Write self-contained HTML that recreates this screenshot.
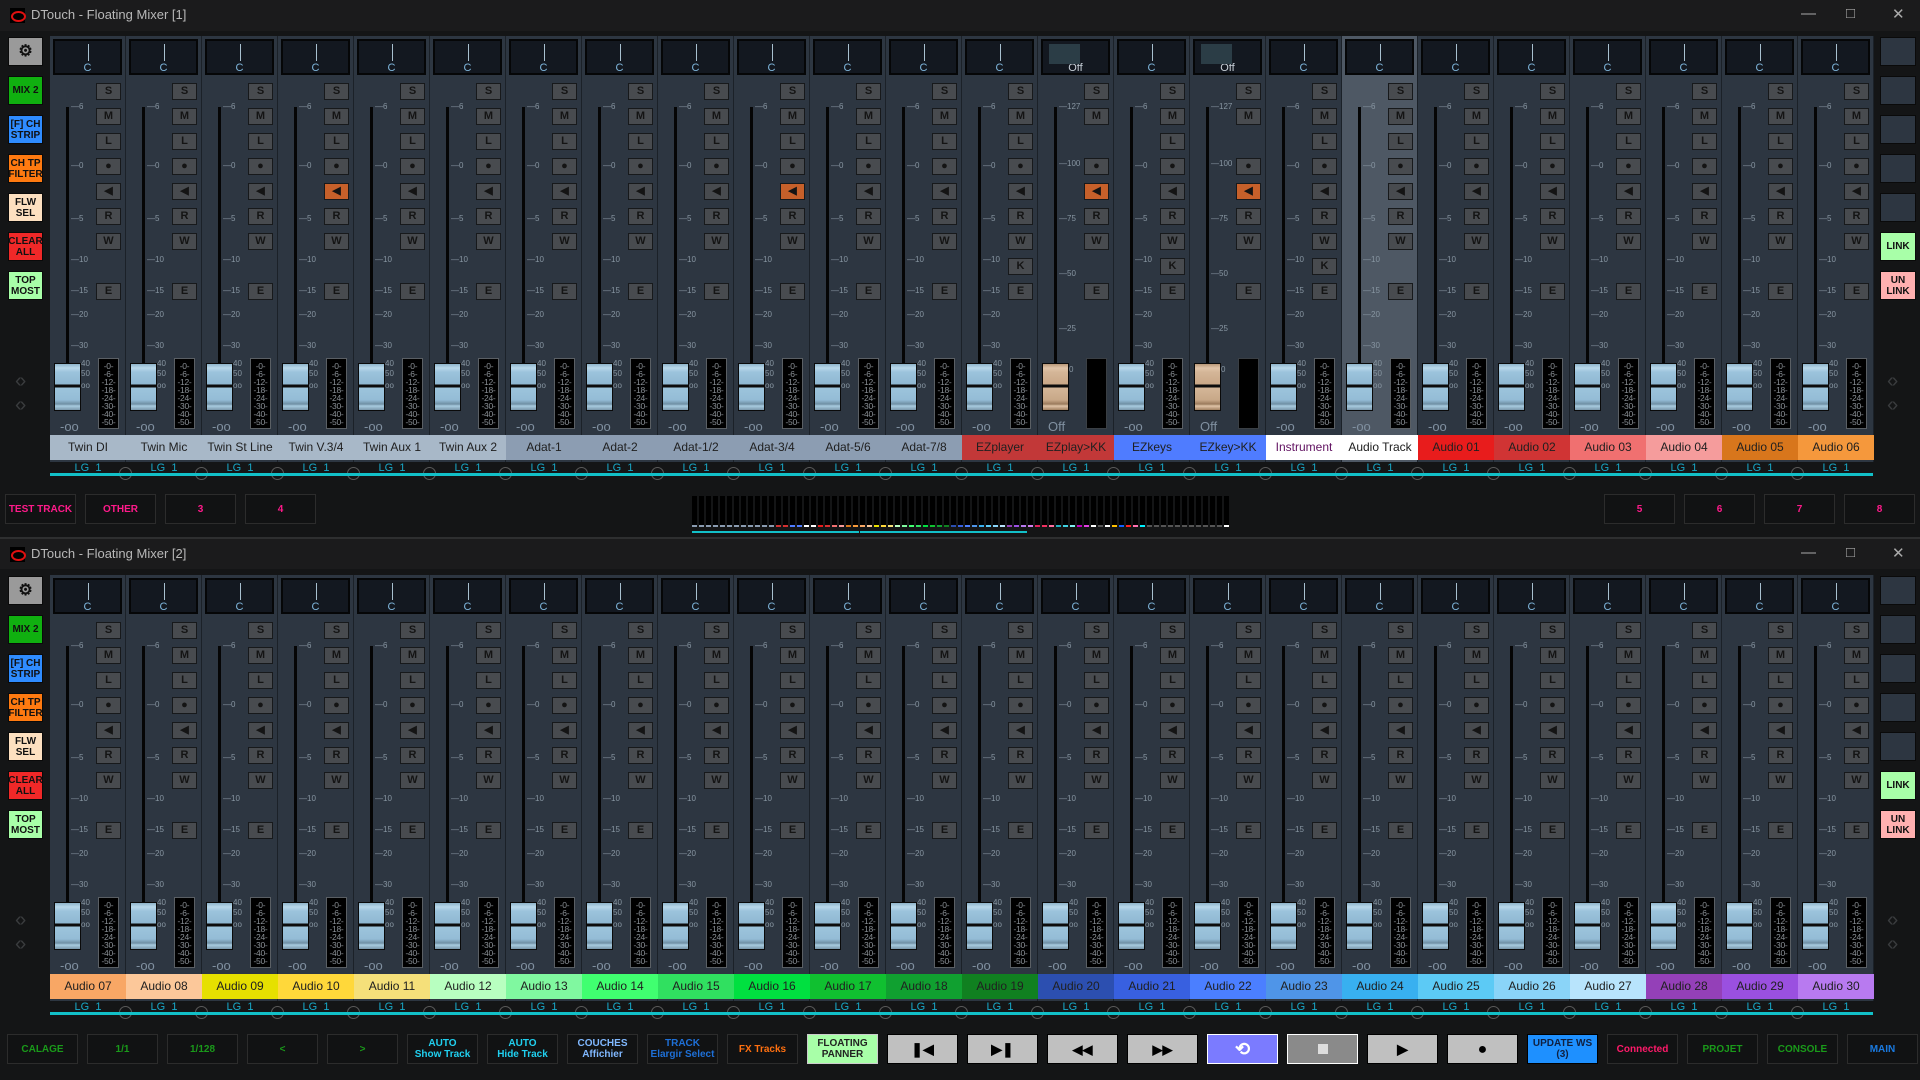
<!DOCTYPE html>
<html><head><meta charset="utf-8"><style>
*{box-sizing:border-box;margin:0;padding:0}
body{width:1920px;height:1080px;background:#141516;position:relative;overflow:hidden;font-family:"Liberation Sans",sans-serif}
.tb{position:absolute;left:0;width:1920px;height:31px;background:#1b1b1c}
.tb .lo{position:absolute;left:10px;top:8px;width:15px;height:15px;background:#000}
.tb .lo:after{content:"";position:absolute;left:1px;top:3px;width:11px;height:7px;border:2px solid #e01010;border-radius:50%}
.tb .t{position:absolute;left:31px;top:7px;font-size:13px;color:#b8b8b8}
.tb .w{position:absolute;top:5px;font-size:15px;color:#aaa}
.mx{position:absolute;left:0;width:1920px;height:445px}
.s{position:absolute;top:0;width:76px;height:426px;background:#2d3641;border-right:1px solid #1b2128}
.s.hl{background:#4e5864}
.p{position:absolute;left:3px;top:3px;width:69px;height:36px;background:#131820;border:2px solid #050607;color:#7fb6dc;font-size:11px;text-align:center;padding-top:21px}
.p i{position:absolute;left:33px;top:3px;width:1px;height:17px;background:#a8c0d0}
.p em{position:absolute;left:6px;top:3px;width:31px;height:20px;background:#2b3d46}
.p.o{color:#c8d0d8}
.bt{position:absolute;left:46px;top:47px;width:25px}
.bt u{display:block;height:17px;margin-bottom:8px;background:#484b4f;border:1px solid #17191b;color:#141414;font:bold 11px/15px "Liberation Sans",sans-serif;text-align:center;text-decoration:none}
.bt u.h{visibility:hidden}
.bt u.or{background:#c6602a}
.f{position:absolute;left:16px;top:71px;width:3px;height:260px;background:#050505}
.sc{position:absolute;left:21px;top:0;font-size:8px;color:#8896a2}
.sc span{position:absolute;white-space:nowrap;line-height:8px}
.sc span:before{content:"\2014 ";color:#8896a2}
.sc span.nd:before{content:""}
.cap{position:absolute;left:4px;top:327px;width:27px;height:48px;border:1px solid #0a0a0a;background:linear-gradient(#8fb3c9 0,#b8d8ea 4px,#9cc4dc 8px,#8fb8d2 20px,#0c0c0c 21px,#0c0c0c 23px,#9cc4dc 24px,#94bcd6 36px,#6f8fa4 40px,#a8cce0 42px,#7a98ac 46px)}
.cap.tan{background:linear-gradient(#b89878 0,#e0c4a8 4px,#d4b698 8px,#caa888 20px,#0c0c0c 21px,#0c0c0c 23px,#d4b698 24px,#c8a888 36px,#9a7a5c 40px,#e0c4a8 42px,#a08060 46px)}
.m{position:absolute;left:48px;top:322px;width:21px;height:71px;background:#000;border:1px solid #5a5f64;color:#8a9096;font-size:8.5px;line-height:8px;text-align:center;padding-top:3px;letter-spacing:-.3px}
.m.bl{border:1px solid #3a3f44}
.inf{position:absolute;left:10px;top:383px;font-size:13px;color:#8090a0}
.n{position:absolute;left:0;top:399px;width:76px;height:25px;font-size:12px;line-height:25px;text-align:center;color:#202020;white-space:nowrap;overflow:hidden}
.lg{position:absolute;left:0;top:426px;width:76px;text-align:center;font-size:11px;color:#18a8c8}
.s+.s:after{content:"";position:absolute;left:-7px;top:431px;width:11px;height:11px;border:1px solid #5a5a5a;border-radius:50%}
.cy{position:absolute;left:50px;top:437px;width:1823px;height:3px;background:#12c0c8}
.lb{position:absolute;left:8px;width:35px;height:29px;border:1px solid #0a0a0a;font:bold 10px/11px "Liberation Sans Narrow","Liberation Sans",sans-serif;text-align:center;display:flex;align-items:center;justify-content:center;color:#111}
.rb{position:absolute;left:1880px;width:36px;height:29px;border:1px solid #0a0a0a;background:#2d3641;font:bold 10px/11px "Liberation Sans",sans-serif;text-align:center;display:flex;align-items:center;justify-content:center;color:#111}
.ar{position:absolute;font-size:20px;color:#3a3c3e;letter-spacing:-2px}
.db{position:absolute;width:71px;height:30px;background:#111213;border:1px solid #2c2c2c;font:bold 10px/11px "Liberation Sans Narrow","Liberation Sans",sans-serif;text-align:center;display:flex;align-items:center;justify-content:center}
.mm{position:absolute;left:692px;top:496px;display:flex}
.mm span{display:block;width:5px;height:31px;margin-right:2px;background:#000;border-bottom:2px solid #555}
</style></head><body>

<!-- Window 1 -->
<div class="tb" style="top:0"><div class="lo"></div><div class="t">DTouch - Floating Mixer [1]</div><div class="w" style="left:1801px">&#8212;</div><div class="w" style="left:1846px">&#9633;</div><div class="w" style="left:1892px">&#10005;</div></div>

<div class="lb" style="top:37px;background:#9a9a9a;font-size:16px">&#9881;</div>
<div class="lb" style="top:76px;background:#10b010">MIX 2</div>
<div class="lb" style="top:115px;background:#2f8cff">[F] CH STRIP</div>
<div class="lb" style="top:154px;background:#ff7a10">CH TP FILTER</div>
<div class="lb" style="top:193px;background:#fde0c0">FLW SEL</div>
<div class="lb" style="top:232px;background:#f02828">CLEAR ALL</div>
<div class="lb" style="top:271px;background:#a8ffa8">TOP MOST</div>
<div class="ar" style="left:15px;top:370px">&#8249;&#8250;</div><div class="ar" style="left:15px;top:394px">&#8249;&#8250;</div>
<div class="rb" style="top:37px"></div><div class="rb" style="top:76px"></div><div class="rb" style="top:115px"></div><div class="rb" style="top:154px"></div><div class="rb" style="top:193px"></div>
<div class="rb" style="top:232px;background:#a8ffa8">LINK</div>
<div class="rb" style="top:271px;background:#ffb0b0">UN LINK</div>
<div class="ar" style="left:1887px;top:370px">&#8249;&#8250;</div><div class="ar" style="left:1887px;top:394px">&#8249;&#8250;</div>

<div class="mx" style="top:36px">
<div class="s" style="left:50px"><div class="p"><i></i>C</div><div class="bt"><u>S</u><u>M</u><u>L</u><u>●</u><u>◀</u><u>R</u><u>W</u><u class="h"></u><u>E</u></div><div class="f"></div><div class="sc"><span style="top:67px">6</span><span style="top:126px">0</span><span style="top:179px">5</span><span style="top:220px">10</span><span style="top:251px">15</span><span style="top:275px">20</span><span style="top:306px">30</span><span class="nd" style="top:324px;left:10px">40</span><span class="nd" style="top:334px;left:10px">50</span><span class="nd" style="top:346px;left:10px">oo</span></div><div class="cap"></div><div class="m">-0-<br>-6-<br>-12-<br>-18-<br>-24-<br>-30-<br>-40-<br>-50-</div><div class="inf">-oo</div><div class="n" style="background:#a8b8c8">Twin DI</div><div class="lg">LG&nbsp; 1</div></div>
<div class="s" style="left:126px"><div class="p"><i></i>C</div><div class="bt"><u>S</u><u>M</u><u>L</u><u>●</u><u>◀</u><u>R</u><u>W</u><u class="h"></u><u>E</u></div><div class="f"></div><div class="sc"><span style="top:67px">6</span><span style="top:126px">0</span><span style="top:179px">5</span><span style="top:220px">10</span><span style="top:251px">15</span><span style="top:275px">20</span><span style="top:306px">30</span><span class="nd" style="top:324px;left:10px">40</span><span class="nd" style="top:334px;left:10px">50</span><span class="nd" style="top:346px;left:10px">oo</span></div><div class="cap"></div><div class="m">-0-<br>-6-<br>-12-<br>-18-<br>-24-<br>-30-<br>-40-<br>-50-</div><div class="inf">-oo</div><div class="n" style="background:#a8b8c8">Twin Mic</div><div class="lg">LG&nbsp; 1</div></div>
<div class="s" style="left:202px"><div class="p"><i></i>C</div><div class="bt"><u>S</u><u>M</u><u>L</u><u>●</u><u>◀</u><u>R</u><u>W</u><u class="h"></u><u>E</u></div><div class="f"></div><div class="sc"><span style="top:67px">6</span><span style="top:126px">0</span><span style="top:179px">5</span><span style="top:220px">10</span><span style="top:251px">15</span><span style="top:275px">20</span><span style="top:306px">30</span><span class="nd" style="top:324px;left:10px">40</span><span class="nd" style="top:334px;left:10px">50</span><span class="nd" style="top:346px;left:10px">oo</span></div><div class="cap"></div><div class="m">-0-<br>-6-<br>-12-<br>-18-<br>-24-<br>-30-<br>-40-<br>-50-</div><div class="inf">-oo</div><div class="n" style="background:#a8b8c8">Twin St Line</div><div class="lg">LG&nbsp; 1</div></div>
<div class="s" style="left:278px"><div class="p"><i></i>C</div><div class="bt"><u>S</u><u>M</u><u>L</u><u>●</u><u class="or">◀</u><u>R</u><u>W</u><u class="h"></u><u>E</u></div><div class="f"></div><div class="sc"><span style="top:67px">6</span><span style="top:126px">0</span><span style="top:179px">5</span><span style="top:220px">10</span><span style="top:251px">15</span><span style="top:275px">20</span><span style="top:306px">30</span><span class="nd" style="top:324px;left:10px">40</span><span class="nd" style="top:334px;left:10px">50</span><span class="nd" style="top:346px;left:10px">oo</span></div><div class="cap"></div><div class="m">-0-<br>-6-<br>-12-<br>-18-<br>-24-<br>-30-<br>-40-<br>-50-</div><div class="inf">-oo</div><div class="n" style="background:#a8b8c8">Twin V.3/4</div><div class="lg">LG&nbsp; 1</div></div>
<div class="s" style="left:354px"><div class="p"><i></i>C</div><div class="bt"><u>S</u><u>M</u><u>L</u><u>●</u><u>◀</u><u>R</u><u>W</u><u class="h"></u><u>E</u></div><div class="f"></div><div class="sc"><span style="top:67px">6</span><span style="top:126px">0</span><span style="top:179px">5</span><span style="top:220px">10</span><span style="top:251px">15</span><span style="top:275px">20</span><span style="top:306px">30</span><span class="nd" style="top:324px;left:10px">40</span><span class="nd" style="top:334px;left:10px">50</span><span class="nd" style="top:346px;left:10px">oo</span></div><div class="cap"></div><div class="m">-0-<br>-6-<br>-12-<br>-18-<br>-24-<br>-30-<br>-40-<br>-50-</div><div class="inf">-oo</div><div class="n" style="background:#a8b8c8">Twin Aux 1</div><div class="lg">LG&nbsp; 1</div></div>
<div class="s" style="left:430px"><div class="p"><i></i>C</div><div class="bt"><u>S</u><u>M</u><u>L</u><u>●</u><u>◀</u><u>R</u><u>W</u><u class="h"></u><u>E</u></div><div class="f"></div><div class="sc"><span style="top:67px">6</span><span style="top:126px">0</span><span style="top:179px">5</span><span style="top:220px">10</span><span style="top:251px">15</span><span style="top:275px">20</span><span style="top:306px">30</span><span class="nd" style="top:324px;left:10px">40</span><span class="nd" style="top:334px;left:10px">50</span><span class="nd" style="top:346px;left:10px">oo</span></div><div class="cap"></div><div class="m">-0-<br>-6-<br>-12-<br>-18-<br>-24-<br>-30-<br>-40-<br>-50-</div><div class="inf">-oo</div><div class="n" style="background:#a8b8c8">Twin Aux 2</div><div class="lg">LG&nbsp; 1</div></div>
<div class="s" style="left:506px"><div class="p"><i></i>C</div><div class="bt"><u>S</u><u>M</u><u>L</u><u>●</u><u>◀</u><u>R</u><u>W</u><u class="h"></u><u>E</u></div><div class="f"></div><div class="sc"><span style="top:67px">6</span><span style="top:126px">0</span><span style="top:179px">5</span><span style="top:220px">10</span><span style="top:251px">15</span><span style="top:275px">20</span><span style="top:306px">30</span><span class="nd" style="top:324px;left:10px">40</span><span class="nd" style="top:334px;left:10px">50</span><span class="nd" style="top:346px;left:10px">oo</span></div><div class="cap"></div><div class="m">-0-<br>-6-<br>-12-<br>-18-<br>-24-<br>-30-<br>-40-<br>-50-</div><div class="inf">-oo</div><div class="n" style="background:#8c9db2">Adat-1</div><div class="lg">LG&nbsp; 1</div></div>
<div class="s" style="left:582px"><div class="p"><i></i>C</div><div class="bt"><u>S</u><u>M</u><u>L</u><u>●</u><u>◀</u><u>R</u><u>W</u><u class="h"></u><u>E</u></div><div class="f"></div><div class="sc"><span style="top:67px">6</span><span style="top:126px">0</span><span style="top:179px">5</span><span style="top:220px">10</span><span style="top:251px">15</span><span style="top:275px">20</span><span style="top:306px">30</span><span class="nd" style="top:324px;left:10px">40</span><span class="nd" style="top:334px;left:10px">50</span><span class="nd" style="top:346px;left:10px">oo</span></div><div class="cap"></div><div class="m">-0-<br>-6-<br>-12-<br>-18-<br>-24-<br>-30-<br>-40-<br>-50-</div><div class="inf">-oo</div><div class="n" style="background:#8c9db2">Adat-2</div><div class="lg">LG&nbsp; 1</div></div>
<div class="s" style="left:658px"><div class="p"><i></i>C</div><div class="bt"><u>S</u><u>M</u><u>L</u><u>●</u><u>◀</u><u>R</u><u>W</u><u class="h"></u><u>E</u></div><div class="f"></div><div class="sc"><span style="top:67px">6</span><span style="top:126px">0</span><span style="top:179px">5</span><span style="top:220px">10</span><span style="top:251px">15</span><span style="top:275px">20</span><span style="top:306px">30</span><span class="nd" style="top:324px;left:10px">40</span><span class="nd" style="top:334px;left:10px">50</span><span class="nd" style="top:346px;left:10px">oo</span></div><div class="cap"></div><div class="m">-0-<br>-6-<br>-12-<br>-18-<br>-24-<br>-30-<br>-40-<br>-50-</div><div class="inf">-oo</div><div class="n" style="background:#8c9db2">Adat-1/2</div><div class="lg">LG&nbsp; 1</div></div>
<div class="s" style="left:734px"><div class="p"><i></i>C</div><div class="bt"><u>S</u><u>M</u><u>L</u><u>●</u><u class="or">◀</u><u>R</u><u>W</u><u class="h"></u><u>E</u></div><div class="f"></div><div class="sc"><span style="top:67px">6</span><span style="top:126px">0</span><span style="top:179px">5</span><span style="top:220px">10</span><span style="top:251px">15</span><span style="top:275px">20</span><span style="top:306px">30</span><span class="nd" style="top:324px;left:10px">40</span><span class="nd" style="top:334px;left:10px">50</span><span class="nd" style="top:346px;left:10px">oo</span></div><div class="cap"></div><div class="m">-0-<br>-6-<br>-12-<br>-18-<br>-24-<br>-30-<br>-40-<br>-50-</div><div class="inf">-oo</div><div class="n" style="background:#8c9db2">Adat-3/4</div><div class="lg">LG&nbsp; 1</div></div>
<div class="s" style="left:810px"><div class="p"><i></i>C</div><div class="bt"><u>S</u><u>M</u><u>L</u><u>●</u><u>◀</u><u>R</u><u>W</u><u class="h"></u><u>E</u></div><div class="f"></div><div class="sc"><span style="top:67px">6</span><span style="top:126px">0</span><span style="top:179px">5</span><span style="top:220px">10</span><span style="top:251px">15</span><span style="top:275px">20</span><span style="top:306px">30</span><span class="nd" style="top:324px;left:10px">40</span><span class="nd" style="top:334px;left:10px">50</span><span class="nd" style="top:346px;left:10px">oo</span></div><div class="cap"></div><div class="m">-0-<br>-6-<br>-12-<br>-18-<br>-24-<br>-30-<br>-40-<br>-50-</div><div class="inf">-oo</div><div class="n" style="background:#8c9db2">Adat-5/6</div><div class="lg">LG&nbsp; 1</div></div>
<div class="s" style="left:886px"><div class="p"><i></i>C</div><div class="bt"><u>S</u><u>M</u><u>L</u><u>●</u><u>◀</u><u>R</u><u>W</u><u class="h"></u><u>E</u></div><div class="f"></div><div class="sc"><span style="top:67px">6</span><span style="top:126px">0</span><span style="top:179px">5</span><span style="top:220px">10</span><span style="top:251px">15</span><span style="top:275px">20</span><span style="top:306px">30</span><span class="nd" style="top:324px;left:10px">40</span><span class="nd" style="top:334px;left:10px">50</span><span class="nd" style="top:346px;left:10px">oo</span></div><div class="cap"></div><div class="m">-0-<br>-6-<br>-12-<br>-18-<br>-24-<br>-30-<br>-40-<br>-50-</div><div class="inf">-oo</div><div class="n" style="background:#8c9db2">Adat-7/8</div><div class="lg">LG&nbsp; 1</div></div>
<div class="s" style="left:962px"><div class="p"><i></i>C</div><div class="bt"><u>S</u><u>M</u><u>L</u><u>●</u><u>◀</u><u>R</u><u>W</u><u>K</u><u>E</u></div><div class="f"></div><div class="sc"><span style="top:67px">6</span><span style="top:126px">0</span><span style="top:179px">5</span><span style="top:220px">10</span><span style="top:251px">15</span><span style="top:275px">20</span><span style="top:306px">30</span><span class="nd" style="top:324px;left:10px">40</span><span class="nd" style="top:334px;left:10px">50</span><span class="nd" style="top:346px;left:10px">oo</span></div><div class="cap"></div><div class="m">-0-<br>-6-<br>-12-<br>-18-<br>-24-<br>-30-<br>-40-<br>-50-</div><div class="inf">-oo</div><div class="n" style="background:#c23838">EZplayer</div><div class="lg">LG&nbsp; 1</div></div>
<div class="s" style="left:1038px"><div class="p o"><em></em>Off</div><div class="bt"><u>S</u><u>M</u><u class="h"></u><u>●</u><u class="or">◀</u><u>R</u><u>W</u><u class="h"></u><u>E</u></div><div class="f"></div><div class="sc"><span style="top:67px">127</span><span style="top:124px">100</span><span style="top:179px">75</span><span style="top:234px">50</span><span style="top:289px">25</span><span class="nd" style="top:330px;left:10px">0</span></div><div class="cap tan"></div><div class="m bl"></div><div class="inf">Off</div><div class="n" style="background:#c23838">EZplay&gt;KK</div><div class="lg">LG&nbsp; 1</div></div>
<div class="s" style="left:1114px"><div class="p"><i></i>C</div><div class="bt"><u>S</u><u>M</u><u>L</u><u>●</u><u>◀</u><u>R</u><u>W</u><u>K</u><u>E</u></div><div class="f"></div><div class="sc"><span style="top:67px">6</span><span style="top:126px">0</span><span style="top:179px">5</span><span style="top:220px">10</span><span style="top:251px">15</span><span style="top:275px">20</span><span style="top:306px">30</span><span class="nd" style="top:324px;left:10px">40</span><span class="nd" style="top:334px;left:10px">50</span><span class="nd" style="top:346px;left:10px">oo</span></div><div class="cap"></div><div class="m">-0-<br>-6-<br>-12-<br>-18-<br>-24-<br>-30-<br>-40-<br>-50-</div><div class="inf">-oo</div><div class="n" style="background:#4f7cff">EZkeys</div><div class="lg">LG&nbsp; 1</div></div>
<div class="s" style="left:1190px"><div class="p o"><em></em>Off</div><div class="bt"><u>S</u><u>M</u><u class="h"></u><u>●</u><u class="or">◀</u><u>R</u><u>W</u><u class="h"></u><u>E</u></div><div class="f"></div><div class="sc"><span style="top:67px">127</span><span style="top:124px">100</span><span style="top:179px">75</span><span style="top:234px">50</span><span style="top:289px">25</span><span class="nd" style="top:330px;left:10px">0</span></div><div class="cap tan"></div><div class="m bl"></div><div class="inf">Off</div><div class="n" style="background:#4f7cff">EZkey&gt;KK</div><div class="lg">LG&nbsp; 1</div></div>
<div class="s" style="left:1266px"><div class="p"><i></i>C</div><div class="bt"><u>S</u><u>M</u><u>L</u><u>●</u><u>◀</u><u>R</u><u>W</u><u>K</u><u>E</u></div><div class="f"></div><div class="sc"><span style="top:67px">6</span><span style="top:126px">0</span><span style="top:179px">5</span><span style="top:220px">10</span><span style="top:251px">15</span><span style="top:275px">20</span><span style="top:306px">30</span><span class="nd" style="top:324px;left:10px">40</span><span class="nd" style="top:334px;left:10px">50</span><span class="nd" style="top:346px;left:10px">oo</span></div><div class="cap"></div><div class="m">-0-<br>-6-<br>-12-<br>-18-<br>-24-<br>-30-<br>-40-<br>-50-</div><div class="inf">-oo</div><div class="n" style="background:#fff;color:#601060">Instrument</div><div class="lg">LG&nbsp; 1</div></div>
<div class="s hl" style="left:1342px"><div class="p"><i></i>C</div><div class="bt"><u>S</u><u>M</u><u>L</u><u>●</u><u>◀</u><u>R</u><u>W</u><u class="h"></u><u>E</u></div><div class="f"></div><div class="sc"><span style="top:67px">6</span><span style="top:126px">0</span><span style="top:179px">5</span><span style="top:220px">10</span><span style="top:251px">15</span><span style="top:275px">20</span><span style="top:306px">30</span><span class="nd" style="top:324px;left:10px">40</span><span class="nd" style="top:334px;left:10px">50</span><span class="nd" style="top:346px;left:10px">oo</span></div><div class="cap"></div><div class="m">-0-<br>-6-<br>-12-<br>-18-<br>-24-<br>-30-<br>-40-<br>-50-</div><div class="inf">-oo</div><div class="n" style="background:#fff">Audio Track</div><div class="lg">LG&nbsp; 1</div></div>
<div class="s" style="left:1418px"><div class="p"><i></i>C</div><div class="bt"><u>S</u><u>M</u><u>L</u><u>●</u><u>◀</u><u>R</u><u>W</u><u class="h"></u><u>E</u></div><div class="f"></div><div class="sc"><span style="top:67px">6</span><span style="top:126px">0</span><span style="top:179px">5</span><span style="top:220px">10</span><span style="top:251px">15</span><span style="top:275px">20</span><span style="top:306px">30</span><span class="nd" style="top:324px;left:10px">40</span><span class="nd" style="top:334px;left:10px">50</span><span class="nd" style="top:346px;left:10px">oo</span></div><div class="cap"></div><div class="m">-0-<br>-6-<br>-12-<br>-18-<br>-24-<br>-30-<br>-40-<br>-50-</div><div class="inf">-oo</div><div class="n" style="background:#e81c1c">Audio 01</div><div class="lg">LG&nbsp; 1</div></div>
<div class="s" style="left:1494px"><div class="p"><i></i>C</div><div class="bt"><u>S</u><u>M</u><u>L</u><u>●</u><u>◀</u><u>R</u><u>W</u><u class="h"></u><u>E</u></div><div class="f"></div><div class="sc"><span style="top:67px">6</span><span style="top:126px">0</span><span style="top:179px">5</span><span style="top:220px">10</span><span style="top:251px">15</span><span style="top:275px">20</span><span style="top:306px">30</span><span class="nd" style="top:324px;left:10px">40</span><span class="nd" style="top:334px;left:10px">50</span><span class="nd" style="top:346px;left:10px">oo</span></div><div class="cap"></div><div class="m">-0-<br>-6-<br>-12-<br>-18-<br>-24-<br>-30-<br>-40-<br>-50-</div><div class="inf">-oo</div><div class="n" style="background:#d03434">Audio 02</div><div class="lg">LG&nbsp; 1</div></div>
<div class="s" style="left:1570px"><div class="p"><i></i>C</div><div class="bt"><u>S</u><u>M</u><u>L</u><u>●</u><u>◀</u><u>R</u><u>W</u><u class="h"></u><u>E</u></div><div class="f"></div><div class="sc"><span style="top:67px">6</span><span style="top:126px">0</span><span style="top:179px">5</span><span style="top:220px">10</span><span style="top:251px">15</span><span style="top:275px">20</span><span style="top:306px">30</span><span class="nd" style="top:324px;left:10px">40</span><span class="nd" style="top:334px;left:10px">50</span><span class="nd" style="top:346px;left:10px">oo</span></div><div class="cap"></div><div class="m">-0-<br>-6-<br>-12-<br>-18-<br>-24-<br>-30-<br>-40-<br>-50-</div><div class="inf">-oo</div><div class="n" style="background:#f07070">Audio 03</div><div class="lg">LG&nbsp; 1</div></div>
<div class="s" style="left:1646px"><div class="p"><i></i>C</div><div class="bt"><u>S</u><u>M</u><u>L</u><u>●</u><u>◀</u><u>R</u><u>W</u><u class="h"></u><u>E</u></div><div class="f"></div><div class="sc"><span style="top:67px">6</span><span style="top:126px">0</span><span style="top:179px">5</span><span style="top:220px">10</span><span style="top:251px">15</span><span style="top:275px">20</span><span style="top:306px">30</span><span class="nd" style="top:324px;left:10px">40</span><span class="nd" style="top:334px;left:10px">50</span><span class="nd" style="top:346px;left:10px">oo</span></div><div class="cap"></div><div class="m">-0-<br>-6-<br>-12-<br>-18-<br>-24-<br>-30-<br>-40-<br>-50-</div><div class="inf">-oo</div><div class="n" style="background:#f59c9c">Audio 04</div><div class="lg">LG&nbsp; 1</div></div>
<div class="s" style="left:1722px"><div class="p"><i></i>C</div><div class="bt"><u>S</u><u>M</u><u>L</u><u>●</u><u>◀</u><u>R</u><u>W</u><u class="h"></u><u>E</u></div><div class="f"></div><div class="sc"><span style="top:67px">6</span><span style="top:126px">0</span><span style="top:179px">5</span><span style="top:220px">10</span><span style="top:251px">15</span><span style="top:275px">20</span><span style="top:306px">30</span><span class="nd" style="top:324px;left:10px">40</span><span class="nd" style="top:334px;left:10px">50</span><span class="nd" style="top:346px;left:10px">oo</span></div><div class="cap"></div><div class="m">-0-<br>-6-<br>-12-<br>-18-<br>-24-<br>-30-<br>-40-<br>-50-</div><div class="inf">-oo</div><div class="n" style="background:#d8761c">Audio 05</div><div class="lg">LG&nbsp; 1</div></div>
<div class="s" style="left:1798px"><div class="p"><i></i>C</div><div class="bt"><u>S</u><u>M</u><u>L</u><u>●</u><u>◀</u><u>R</u><u>W</u><u class="h"></u><u>E</u></div><div class="f"></div><div class="sc"><span style="top:67px">6</span><span style="top:126px">0</span><span style="top:179px">5</span><span style="top:220px">10</span><span style="top:251px">15</span><span style="top:275px">20</span><span style="top:306px">30</span><span class="nd" style="top:324px;left:10px">40</span><span class="nd" style="top:334px;left:10px">50</span><span class="nd" style="top:346px;left:10px">oo</span></div><div class="cap"></div><div class="m">-0-<br>-6-<br>-12-<br>-18-<br>-24-<br>-30-<br>-40-<br>-50-</div><div class="inf">-oo</div><div class="n" style="background:#f5983c">Audio 06</div><div class="lg">LG&nbsp; 1</div></div>
<div class="cy"></div>
</div>

<!-- middle row -->
<div class="db" style="left:5px;top:494px;color:#ff1a8a">TEST TRACK</div>
<div class="db" style="left:85px;top:494px;color:#ff1a8a">OTHER</div>
<div class="db" style="left:165px;top:494px;color:#ff1a8a">3</div>
<div class="db" style="left:245px;top:494px;color:#ff1a8a">4</div>
<div class="db" style="left:1604px;top:494px;color:#ff1a8a">5</div>
<div class="db" style="left:1684px;top:494px;color:#ff1a8a">6</div>
<div class="db" style="left:1764px;top:494px;color:#ff1a8a">7</div>
<div class="db" style="left:1844px;top:494px;color:#ff1a8a">8</div>
<div class="mm">
<span style="border-color:#8a9bb0"></span><span style="border-color:#8a9bb0"></span><span style="border-color:#8a9bb0"></span><span style="border-color:#8a9bb0"></span><span style="border-color:#8a9bb0"></span><span style="border-color:#8a9bb0"></span><span style="border-color:#8a9bb0"></span><span style="border-color:#8a9bb0"></span><span style="border-color:#8a9bb0"></span><span style="border-color:#8a9bb0"></span><span style="border-color:#8a9bb0"></span><span style="border-color:#8a9bb0"></span>
<span style="border-color:#d03030"></span><span style="border-color:#d03030"></span><span style="border-color:#4f7cff"></span><span style="border-color:#4f7cff"></span><span style="border-color:#fff"></span><span style="border-color:#fff"></span><span style="border-color:#e81c1c"></span><span style="border-color:#d63030"></span><span style="border-color:#f07070"></span><span style="border-color:#f59a9a"></span><span style="border-color:#d9761a"></span><span style="border-color:#f59a3c"></span>
<span style="border-color:#f8a765"></span><span style="border-color:#fcc89a"></span><span style="border-color:#e8e000"></span><span style="border-color:#ffd83a"></span><span style="border-color:#f5e07a"></span><span style="border-color:#b8ffc0"></span><span style="border-color:#80f8a0"></span><span style="border-color:#40ff70"></span><span style="border-color:#30e060"></span><span style="border-color:#00e040"></span><span style="border-color:#10c030"></span><span style="border-color:#10a030"></span><span style="border-color:#108020"></span>
<span style="border-color:#2c4fb0"></span><span style="border-color:#3860e0"></span><span style="border-color:#4b7fff"></span><span style="border-color:#4f95e8"></span><span style="border-color:#38b0f0"></span><span style="border-color:#5ccaf5"></span><span style="border-color:#8ad4f8"></span><span style="border-color:#b8e4fc"></span><span style="border-color:#9440b8"></span><span style="border-color:#9a50e0"></span><span style="border-color:#b87af0"></span><span style="border-color:#d080f0"></span>
<span style="border-color:#e0205a"></span><span style="border-color:#f03060"></span><span style="border-color:#ff70a0"></span><span style="border-color:#20b0c0"></span><span style="border-color:#40d0e0"></span><span style="border-color:#80f0f0"></span><span style="border-color:#c000c0"></span><span style="border-color:#e040e0"></span><span style="border-color:#fff"></span><span style="border-color:#555"></span><span style="border-color:#fff"></span><span style="border-color:#ffc000"></span><span style="border-color:#1060ff"></span><span style="border-color:#ff2020"></span><span style="border-color:#ff70b0"></span><span style="border-color:#00f0ff"></span>
<span></span><span></span><span></span><span></span><span></span><span></span><span></span><span></span><span></span><span></span><span></span><span style="border-color:#fff"></span>
</div>
<div style="position:absolute;left:692px;top:531px;width:167px;height:2px;background:#12c0c8"></div>
<div style="position:absolute;left:860px;top:531px;width:167px;height:2px;background:#12c0c8"></div>

<!-- Window 2 -->
<div style="position:absolute;left:0;top:537px;width:1920px;height:2px;background:#2e2f30"></div>
<div class="tb" style="top:539px;height:30px"><div class="lo"></div><div class="t">DTouch - Floating Mixer [2]</div><div class="w" style="left:1801px">&#8212;</div><div class="w" style="left:1846px">&#9633;</div><div class="w" style="left:1892px">&#10005;</div></div>

<div class="lb" style="top:576px;background:#9a9a9a;font-size:16px">&#9881;</div>
<div class="lb" style="top:615px;background:#10b010">MIX 2</div>
<div class="lb" style="top:654px;background:#2f8cff">[F] CH STRIP</div>
<div class="lb" style="top:693px;background:#ff7a10">CH TP FILTER</div>
<div class="lb" style="top:732px;background:#fde0c0">FLW SEL</div>
<div class="lb" style="top:771px;background:#f02828">CLEAR ALL</div>
<div class="lb" style="top:810px;background:#a8ffa8">TOP MOST</div>
<div class="ar" style="left:15px;top:909px">&#8249;&#8250;</div><div class="ar" style="left:15px;top:933px">&#8249;&#8250;</div>
<div class="rb" style="top:576px"></div><div class="rb" style="top:615px"></div><div class="rb" style="top:654px"></div><div class="rb" style="top:693px"></div><div class="rb" style="top:732px"></div>
<div class="rb" style="top:771px;background:#a8ffa8">LINK</div>
<div class="rb" style="top:810px;background:#ffb0b0">UN LINK</div>
<div class="ar" style="left:1887px;top:909px">&#8249;&#8250;</div><div class="ar" style="left:1887px;top:933px">&#8249;&#8250;</div>

<div class="mx" style="top:575px">
<div class="s" style="left:50px"><div class="p"><i></i>C</div><div class="bt"><u>S</u><u>M</u><u>L</u><u>●</u><u>◀</u><u>R</u><u>W</u><u class="h"></u><u>E</u></div><div class="f"></div><div class="sc"><span style="top:67px">6</span><span style="top:126px">0</span><span style="top:179px">5</span><span style="top:220px">10</span><span style="top:251px">15</span><span style="top:275px">20</span><span style="top:306px">30</span><span class="nd" style="top:324px;left:10px">40</span><span class="nd" style="top:334px;left:10px">50</span><span class="nd" style="top:346px;left:10px">oo</span></div><div class="cap"></div><div class="m">-0-<br>-6-<br>-12-<br>-18-<br>-24-<br>-30-<br>-40-<br>-50-</div><div class="inf">-oo</div><div class="n" style="background:#f8a765">Audio 07</div><div class="lg">LG&nbsp; 1</div></div>
<div class="s" style="left:126px"><div class="p"><i></i>C</div><div class="bt"><u>S</u><u>M</u><u>L</u><u>●</u><u>◀</u><u>R</u><u>W</u><u class="h"></u><u>E</u></div><div class="f"></div><div class="sc"><span style="top:67px">6</span><span style="top:126px">0</span><span style="top:179px">5</span><span style="top:220px">10</span><span style="top:251px">15</span><span style="top:275px">20</span><span style="top:306px">30</span><span class="nd" style="top:324px;left:10px">40</span><span class="nd" style="top:334px;left:10px">50</span><span class="nd" style="top:346px;left:10px">oo</span></div><div class="cap"></div><div class="m">-0-<br>-6-<br>-12-<br>-18-<br>-24-<br>-30-<br>-40-<br>-50-</div><div class="inf">-oo</div><div class="n" style="background:#fcc89a">Audio 08</div><div class="lg">LG&nbsp; 1</div></div>
<div class="s" style="left:202px"><div class="p"><i></i>C</div><div class="bt"><u>S</u><u>M</u><u>L</u><u>●</u><u>◀</u><u>R</u><u>W</u><u class="h"></u><u>E</u></div><div class="f"></div><div class="sc"><span style="top:67px">6</span><span style="top:126px">0</span><span style="top:179px">5</span><span style="top:220px">10</span><span style="top:251px">15</span><span style="top:275px">20</span><span style="top:306px">30</span><span class="nd" style="top:324px;left:10px">40</span><span class="nd" style="top:334px;left:10px">50</span><span class="nd" style="top:346px;left:10px">oo</span></div><div class="cap"></div><div class="m">-0-<br>-6-<br>-12-<br>-18-<br>-24-<br>-30-<br>-40-<br>-50-</div><div class="inf">-oo</div><div class="n" style="background:#e6e000">Audio 09</div><div class="lg">LG&nbsp; 1</div></div>
<div class="s" style="left:278px"><div class="p"><i></i>C</div><div class="bt"><u>S</u><u>M</u><u>L</u><u>●</u><u>◀</u><u>R</u><u>W</u><u class="h"></u><u>E</u></div><div class="f"></div><div class="sc"><span style="top:67px">6</span><span style="top:126px">0</span><span style="top:179px">5</span><span style="top:220px">10</span><span style="top:251px">15</span><span style="top:275px">20</span><span style="top:306px">30</span><span class="nd" style="top:324px;left:10px">40</span><span class="nd" style="top:334px;left:10px">50</span><span class="nd" style="top:346px;left:10px">oo</span></div><div class="cap"></div><div class="m">-0-<br>-6-<br>-12-<br>-18-<br>-24-<br>-30-<br>-40-<br>-50-</div><div class="inf">-oo</div><div class="n" style="background:#ffd83a">Audio 10</div><div class="lg">LG&nbsp; 1</div></div>
<div class="s" style="left:354px"><div class="p"><i></i>C</div><div class="bt"><u>S</u><u>M</u><u>L</u><u>●</u><u>◀</u><u>R</u><u>W</u><u class="h"></u><u>E</u></div><div class="f"></div><div class="sc"><span style="top:67px">6</span><span style="top:126px">0</span><span style="top:179px">5</span><span style="top:220px">10</span><span style="top:251px">15</span><span style="top:275px">20</span><span style="top:306px">30</span><span class="nd" style="top:324px;left:10px">40</span><span class="nd" style="top:334px;left:10px">50</span><span class="nd" style="top:346px;left:10px">oo</span></div><div class="cap"></div><div class="m">-0-<br>-6-<br>-12-<br>-18-<br>-24-<br>-30-<br>-40-<br>-50-</div><div class="inf">-oo</div><div class="n" style="background:#f5e07a">Audio 11</div><div class="lg">LG&nbsp; 1</div></div>
<div class="s" style="left:430px"><div class="p"><i></i>C</div><div class="bt"><u>S</u><u>M</u><u>L</u><u>●</u><u>◀</u><u>R</u><u>W</u><u class="h"></u><u>E</u></div><div class="f"></div><div class="sc"><span style="top:67px">6</span><span style="top:126px">0</span><span style="top:179px">5</span><span style="top:220px">10</span><span style="top:251px">15</span><span style="top:275px">20</span><span style="top:306px">30</span><span class="nd" style="top:324px;left:10px">40</span><span class="nd" style="top:334px;left:10px">50</span><span class="nd" style="top:346px;left:10px">oo</span></div><div class="cap"></div><div class="m">-0-<br>-6-<br>-12-<br>-18-<br>-24-<br>-30-<br>-40-<br>-50-</div><div class="inf">-oo</div><div class="n" style="background:#b8ffc0">Audio 12</div><div class="lg">LG&nbsp; 1</div></div>
<div class="s" style="left:506px"><div class="p"><i></i>C</div><div class="bt"><u>S</u><u>M</u><u>L</u><u>●</u><u>◀</u><u>R</u><u>W</u><u class="h"></u><u>E</u></div><div class="f"></div><div class="sc"><span style="top:67px">6</span><span style="top:126px">0</span><span style="top:179px">5</span><span style="top:220px">10</span><span style="top:251px">15</span><span style="top:275px">20</span><span style="top:306px">30</span><span class="nd" style="top:324px;left:10px">40</span><span class="nd" style="top:334px;left:10px">50</span><span class="nd" style="top:346px;left:10px">oo</span></div><div class="cap"></div><div class="m">-0-<br>-6-<br>-12-<br>-18-<br>-24-<br>-30-<br>-40-<br>-50-</div><div class="inf">-oo</div><div class="n" style="background:#80f8a0">Audio 13</div><div class="lg">LG&nbsp; 1</div></div>
<div class="s" style="left:582px"><div class="p"><i></i>C</div><div class="bt"><u>S</u><u>M</u><u>L</u><u>●</u><u>◀</u><u>R</u><u>W</u><u class="h"></u><u>E</u></div><div class="f"></div><div class="sc"><span style="top:67px">6</span><span style="top:126px">0</span><span style="top:179px">5</span><span style="top:220px">10</span><span style="top:251px">15</span><span style="top:275px">20</span><span style="top:306px">30</span><span class="nd" style="top:324px;left:10px">40</span><span class="nd" style="top:334px;left:10px">50</span><span class="nd" style="top:346px;left:10px">oo</span></div><div class="cap"></div><div class="m">-0-<br>-6-<br>-12-<br>-18-<br>-24-<br>-30-<br>-40-<br>-50-</div><div class="inf">-oo</div><div class="n" style="background:#40ff70">Audio 14</div><div class="lg">LG&nbsp; 1</div></div>
<div class="s" style="left:658px"><div class="p"><i></i>C</div><div class="bt"><u>S</u><u>M</u><u>L</u><u>●</u><u>◀</u><u>R</u><u>W</u><u class="h"></u><u>E</u></div><div class="f"></div><div class="sc"><span style="top:67px">6</span><span style="top:126px">0</span><span style="top:179px">5</span><span style="top:220px">10</span><span style="top:251px">15</span><span style="top:275px">20</span><span style="top:306px">30</span><span class="nd" style="top:324px;left:10px">40</span><span class="nd" style="top:334px;left:10px">50</span><span class="nd" style="top:346px;left:10px">oo</span></div><div class="cap"></div><div class="m">-0-<br>-6-<br>-12-<br>-18-<br>-24-<br>-30-<br>-40-<br>-50-</div><div class="inf">-oo</div><div class="n" style="background:#30e060">Audio 15</div><div class="lg">LG&nbsp; 1</div></div>
<div class="s" style="left:734px"><div class="p"><i></i>C</div><div class="bt"><u>S</u><u>M</u><u>L</u><u>●</u><u>◀</u><u>R</u><u>W</u><u class="h"></u><u>E</u></div><div class="f"></div><div class="sc"><span style="top:67px">6</span><span style="top:126px">0</span><span style="top:179px">5</span><span style="top:220px">10</span><span style="top:251px">15</span><span style="top:275px">20</span><span style="top:306px">30</span><span class="nd" style="top:324px;left:10px">40</span><span class="nd" style="top:334px;left:10px">50</span><span class="nd" style="top:346px;left:10px">oo</span></div><div class="cap"></div><div class="m">-0-<br>-6-<br>-12-<br>-18-<br>-24-<br>-30-<br>-40-<br>-50-</div><div class="inf">-oo</div><div class="n" style="background:#00e040">Audio 16</div><div class="lg">LG&nbsp; 1</div></div>
<div class="s" style="left:810px"><div class="p"><i></i>C</div><div class="bt"><u>S</u><u>M</u><u>L</u><u>●</u><u>◀</u><u>R</u><u>W</u><u class="h"></u><u>E</u></div><div class="f"></div><div class="sc"><span style="top:67px">6</span><span style="top:126px">0</span><span style="top:179px">5</span><span style="top:220px">10</span><span style="top:251px">15</span><span style="top:275px">20</span><span style="top:306px">30</span><span class="nd" style="top:324px;left:10px">40</span><span class="nd" style="top:334px;left:10px">50</span><span class="nd" style="top:346px;left:10px">oo</span></div><div class="cap"></div><div class="m">-0-<br>-6-<br>-12-<br>-18-<br>-24-<br>-30-<br>-40-<br>-50-</div><div class="inf">-oo</div><div class="n" style="background:#10c030">Audio 17</div><div class="lg">LG&nbsp; 1</div></div>
<div class="s" style="left:886px"><div class="p"><i></i>C</div><div class="bt"><u>S</u><u>M</u><u>L</u><u>●</u><u>◀</u><u>R</u><u>W</u><u class="h"></u><u>E</u></div><div class="f"></div><div class="sc"><span style="top:67px">6</span><span style="top:126px">0</span><span style="top:179px">5</span><span style="top:220px">10</span><span style="top:251px">15</span><span style="top:275px">20</span><span style="top:306px">30</span><span class="nd" style="top:324px;left:10px">40</span><span class="nd" style="top:334px;left:10px">50</span><span class="nd" style="top:346px;left:10px">oo</span></div><div class="cap"></div><div class="m">-0-<br>-6-<br>-12-<br>-18-<br>-24-<br>-30-<br>-40-<br>-50-</div><div class="inf">-oo</div><div class="n" style="background:#10a030">Audio 18</div><div class="lg">LG&nbsp; 1</div></div>
<div class="s" style="left:962px"><div class="p"><i></i>C</div><div class="bt"><u>S</u><u>M</u><u>L</u><u>●</u><u>◀</u><u>R</u><u>W</u><u class="h"></u><u>E</u></div><div class="f"></div><div class="sc"><span style="top:67px">6</span><span style="top:126px">0</span><span style="top:179px">5</span><span style="top:220px">10</span><span style="top:251px">15</span><span style="top:275px">20</span><span style="top:306px">30</span><span class="nd" style="top:324px;left:10px">40</span><span class="nd" style="top:334px;left:10px">50</span><span class="nd" style="top:346px;left:10px">oo</span></div><div class="cap"></div><div class="m">-0-<br>-6-<br>-12-<br>-18-<br>-24-<br>-30-<br>-40-<br>-50-</div><div class="inf">-oo</div><div class="n" style="background:#108020">Audio 19</div><div class="lg">LG&nbsp; 1</div></div>
<div class="s" style="left:1038px"><div class="p"><i></i>C</div><div class="bt"><u>S</u><u>M</u><u>L</u><u>●</u><u>◀</u><u>R</u><u>W</u><u class="h"></u><u>E</u></div><div class="f"></div><div class="sc"><span style="top:67px">6</span><span style="top:126px">0</span><span style="top:179px">5</span><span style="top:220px">10</span><span style="top:251px">15</span><span style="top:275px">20</span><span style="top:306px">30</span><span class="nd" style="top:324px;left:10px">40</span><span class="nd" style="top:334px;left:10px">50</span><span class="nd" style="top:346px;left:10px">oo</span></div><div class="cap"></div><div class="m">-0-<br>-6-<br>-12-<br>-18-<br>-24-<br>-30-<br>-40-<br>-50-</div><div class="inf">-oo</div><div class="n" style="background:#2c4fb0">Audio 20</div><div class="lg">LG&nbsp; 1</div></div>
<div class="s" style="left:1114px"><div class="p"><i></i>C</div><div class="bt"><u>S</u><u>M</u><u>L</u><u>●</u><u>◀</u><u>R</u><u>W</u><u class="h"></u><u>E</u></div><div class="f"></div><div class="sc"><span style="top:67px">6</span><span style="top:126px">0</span><span style="top:179px">5</span><span style="top:220px">10</span><span style="top:251px">15</span><span style="top:275px">20</span><span style="top:306px">30</span><span class="nd" style="top:324px;left:10px">40</span><span class="nd" style="top:334px;left:10px">50</span><span class="nd" style="top:346px;left:10px">oo</span></div><div class="cap"></div><div class="m">-0-<br>-6-<br>-12-<br>-18-<br>-24-<br>-30-<br>-40-<br>-50-</div><div class="inf">-oo</div><div class="n" style="background:#3860e0">Audio 21</div><div class="lg">LG&nbsp; 1</div></div>
<div class="s" style="left:1190px"><div class="p"><i></i>C</div><div class="bt"><u>S</u><u>M</u><u>L</u><u>●</u><u>◀</u><u>R</u><u>W</u><u class="h"></u><u>E</u></div><div class="f"></div><div class="sc"><span style="top:67px">6</span><span style="top:126px">0</span><span style="top:179px">5</span><span style="top:220px">10</span><span style="top:251px">15</span><span style="top:275px">20</span><span style="top:306px">30</span><span class="nd" style="top:324px;left:10px">40</span><span class="nd" style="top:334px;left:10px">50</span><span class="nd" style="top:346px;left:10px">oo</span></div><div class="cap"></div><div class="m">-0-<br>-6-<br>-12-<br>-18-<br>-24-<br>-30-<br>-40-<br>-50-</div><div class="inf">-oo</div><div class="n" style="background:#4b7fff">Audio 22</div><div class="lg">LG&nbsp; 1</div></div>
<div class="s" style="left:1266px"><div class="p"><i></i>C</div><div class="bt"><u>S</u><u>M</u><u>L</u><u>●</u><u>◀</u><u>R</u><u>W</u><u class="h"></u><u>E</u></div><div class="f"></div><div class="sc"><span style="top:67px">6</span><span style="top:126px">0</span><span style="top:179px">5</span><span style="top:220px">10</span><span style="top:251px">15</span><span style="top:275px">20</span><span style="top:306px">30</span><span class="nd" style="top:324px;left:10px">40</span><span class="nd" style="top:334px;left:10px">50</span><span class="nd" style="top:346px;left:10px">oo</span></div><div class="cap"></div><div class="m">-0-<br>-6-<br>-12-<br>-18-<br>-24-<br>-30-<br>-40-<br>-50-</div><div class="inf">-oo</div><div class="n" style="background:#4f95e8">Audio 23</div><div class="lg">LG&nbsp; 1</div></div>
<div class="s" style="left:1342px"><div class="p"><i></i>C</div><div class="bt"><u>S</u><u>M</u><u>L</u><u>●</u><u>◀</u><u>R</u><u>W</u><u class="h"></u><u>E</u></div><div class="f"></div><div class="sc"><span style="top:67px">6</span><span style="top:126px">0</span><span style="top:179px">5</span><span style="top:220px">10</span><span style="top:251px">15</span><span style="top:275px">20</span><span style="top:306px">30</span><span class="nd" style="top:324px;left:10px">40</span><span class="nd" style="top:334px;left:10px">50</span><span class="nd" style="top:346px;left:10px">oo</span></div><div class="cap"></div><div class="m">-0-<br>-6-<br>-12-<br>-18-<br>-24-<br>-30-<br>-40-<br>-50-</div><div class="inf">-oo</div><div class="n" style="background:#38b0f0">Audio 24</div><div class="lg">LG&nbsp; 1</div></div>
<div class="s" style="left:1418px"><div class="p"><i></i>C</div><div class="bt"><u>S</u><u>M</u><u>L</u><u>●</u><u>◀</u><u>R</u><u>W</u><u class="h"></u><u>E</u></div><div class="f"></div><div class="sc"><span style="top:67px">6</span><span style="top:126px">0</span><span style="top:179px">5</span><span style="top:220px">10</span><span style="top:251px">15</span><span style="top:275px">20</span><span style="top:306px">30</span><span class="nd" style="top:324px;left:10px">40</span><span class="nd" style="top:334px;left:10px">50</span><span class="nd" style="top:346px;left:10px">oo</span></div><div class="cap"></div><div class="m">-0-<br>-6-<br>-12-<br>-18-<br>-24-<br>-30-<br>-40-<br>-50-</div><div class="inf">-oo</div><div class="n" style="background:#5ccaf5">Audio 25</div><div class="lg">LG&nbsp; 1</div></div>
<div class="s" style="left:1494px"><div class="p"><i></i>C</div><div class="bt"><u>S</u><u>M</u><u>L</u><u>●</u><u>◀</u><u>R</u><u>W</u><u class="h"></u><u>E</u></div><div class="f"></div><div class="sc"><span style="top:67px">6</span><span style="top:126px">0</span><span style="top:179px">5</span><span style="top:220px">10</span><span style="top:251px">15</span><span style="top:275px">20</span><span style="top:306px">30</span><span class="nd" style="top:324px;left:10px">40</span><span class="nd" style="top:334px;left:10px">50</span><span class="nd" style="top:346px;left:10px">oo</span></div><div class="cap"></div><div class="m">-0-<br>-6-<br>-12-<br>-18-<br>-24-<br>-30-<br>-40-<br>-50-</div><div class="inf">-oo</div><div class="n" style="background:#8ad4f8">Audio 26</div><div class="lg">LG&nbsp; 1</div></div>
<div class="s" style="left:1570px"><div class="p"><i></i>C</div><div class="bt"><u>S</u><u>M</u><u>L</u><u>●</u><u>◀</u><u>R</u><u>W</u><u class="h"></u><u>E</u></div><div class="f"></div><div class="sc"><span style="top:67px">6</span><span style="top:126px">0</span><span style="top:179px">5</span><span style="top:220px">10</span><span style="top:251px">15</span><span style="top:275px">20</span><span style="top:306px">30</span><span class="nd" style="top:324px;left:10px">40</span><span class="nd" style="top:334px;left:10px">50</span><span class="nd" style="top:346px;left:10px">oo</span></div><div class="cap"></div><div class="m">-0-<br>-6-<br>-12-<br>-18-<br>-24-<br>-30-<br>-40-<br>-50-</div><div class="inf">-oo</div><div class="n" style="background:#b8e4fc">Audio 27</div><div class="lg">LG&nbsp; 1</div></div>
<div class="s" style="left:1646px"><div class="p"><i></i>C</div><div class="bt"><u>S</u><u>M</u><u>L</u><u>●</u><u>◀</u><u>R</u><u>W</u><u class="h"></u><u>E</u></div><div class="f"></div><div class="sc"><span style="top:67px">6</span><span style="top:126px">0</span><span style="top:179px">5</span><span style="top:220px">10</span><span style="top:251px">15</span><span style="top:275px">20</span><span style="top:306px">30</span><span class="nd" style="top:324px;left:10px">40</span><span class="nd" style="top:334px;left:10px">50</span><span class="nd" style="top:346px;left:10px">oo</span></div><div class="cap"></div><div class="m">-0-<br>-6-<br>-12-<br>-18-<br>-24-<br>-30-<br>-40-<br>-50-</div><div class="inf">-oo</div><div class="n" style="background:#9440b8">Audio 28</div><div class="lg">LG&nbsp; 1</div></div>
<div class="s" style="left:1722px"><div class="p"><i></i>C</div><div class="bt"><u>S</u><u>M</u><u>L</u><u>●</u><u>◀</u><u>R</u><u>W</u><u class="h"></u><u>E</u></div><div class="f"></div><div class="sc"><span style="top:67px">6</span><span style="top:126px">0</span><span style="top:179px">5</span><span style="top:220px">10</span><span style="top:251px">15</span><span style="top:275px">20</span><span style="top:306px">30</span><span class="nd" style="top:324px;left:10px">40</span><span class="nd" style="top:334px;left:10px">50</span><span class="nd" style="top:346px;left:10px">oo</span></div><div class="cap"></div><div class="m">-0-<br>-6-<br>-12-<br>-18-<br>-24-<br>-30-<br>-40-<br>-50-</div><div class="inf">-oo</div><div class="n" style="background:#9a50e0">Audio 29</div><div class="lg">LG&nbsp; 1</div></div>
<div class="s" style="left:1798px"><div class="p"><i></i>C</div><div class="bt"><u>S</u><u>M</u><u>L</u><u>●</u><u>◀</u><u>R</u><u>W</u><u class="h"></u><u>E</u></div><div class="f"></div><div class="sc"><span style="top:67px">6</span><span style="top:126px">0</span><span style="top:179px">5</span><span style="top:220px">10</span><span style="top:251px">15</span><span style="top:275px">20</span><span style="top:306px">30</span><span class="nd" style="top:324px;left:10px">40</span><span class="nd" style="top:334px;left:10px">50</span><span class="nd" style="top:346px;left:10px">oo</span></div><div class="cap"></div><div class="m">-0-<br>-6-<br>-12-<br>-18-<br>-24-<br>-30-<br>-40-<br>-50-</div><div class="inf">-oo</div><div class="n" style="background:#b87af0">Audio 30</div><div class="lg">LG&nbsp; 1</div></div>
<div class="cy"></div>
</div>

<!-- bottom bar -->
<div class="db" style="left:7px;top:1034px;color:#1a9a1a">CALAGE</div>
<div class="db" style="left:87px;top:1034px;color:#1a9a1a">1/1</div>
<div class="db" style="left:167px;top:1034px;color:#1a9a1a">1/128</div>
<div class="db" style="left:247px;top:1034px;color:#1a9a1a">&lt;</div>
<div class="db" style="left:327px;top:1034px;color:#1a9a1a">&gt;</div>
<div class="db" style="left:407px;top:1034px;color:#20d0f0">AUTO<br>Show Track</div>
<div class="db" style="left:487px;top:1034px;color:#20d0f0">AUTO<br>Hide Track</div>
<div class="db" style="left:567px;top:1034px;color:#80b8ff">COUCHES<br>Affichier</div>
<div class="db" style="left:647px;top:1034px;color:#1e70d8">TRACK<br>Elargir Select</div>
<div class="db" style="left:727px;top:1034px;color:#ff7010">FX Tracks</div>
<div class="db" style="left:807px;top:1034px;background:#a8ffa8;color:#222;border-color:#ccc">FLOATING<br>PANNER</div>
<div class="db" style="left:887px;top:1034px;background:#c0c0c0;color:#000;border-color:#000;font-size:14px">&#10074;&#9664;</div>
<div class="db" style="left:967px;top:1034px;background:#c0c0c0;color:#000;border-color:#000;font-size:14px">&#9654;&#10074;</div>
<div class="db" style="left:1047px;top:1034px;background:#c0c0c0;color:#000;border-color:#000;font-size:13px">&#9664;&#9664;</div>
<div class="db" style="left:1127px;top:1034px;background:#c0c0c0;color:#000;border-color:#000;font-size:13px">&#9654;&#9654;</div>
<div class="db" style="left:1207px;top:1034px;background:#7b7bff;color:#fff;border-color:#fff;font-size:18px">&#10226;</div>
<div class="db" style="left:1287px;top:1034px;background:#8a8a8a;border-color:#fff"><span style="display:block;width:10px;height:10px;background:#ddd"></span></div>
<div class="db" style="left:1367px;top:1034px;background:#c0c0c0;color:#000;border-color:#000;font-size:14px">&#9654;</div>
<div class="db" style="left:1447px;top:1034px;background:#c0c0c0;color:#000;border-color:#000;font-size:16px">&#9679;</div>
<div class="db" style="left:1527px;top:1034px;background:#1e90ff;color:#102040;border-color:#000">UPDATE WS<br>(3)</div>
<div class="db" style="left:1607px;top:1034px;color:#ff1a6a">Connected</div>
<div class="db" style="left:1687px;top:1034px;color:#1a9a1a">PROJET</div>
<div class="db" style="left:1767px;top:1034px;color:#1a9a1a">CONSOLE</div>
<div class="db" style="left:1847px;top:1034px;color:#1a7ae0">MAIN</div>
</body></html>
